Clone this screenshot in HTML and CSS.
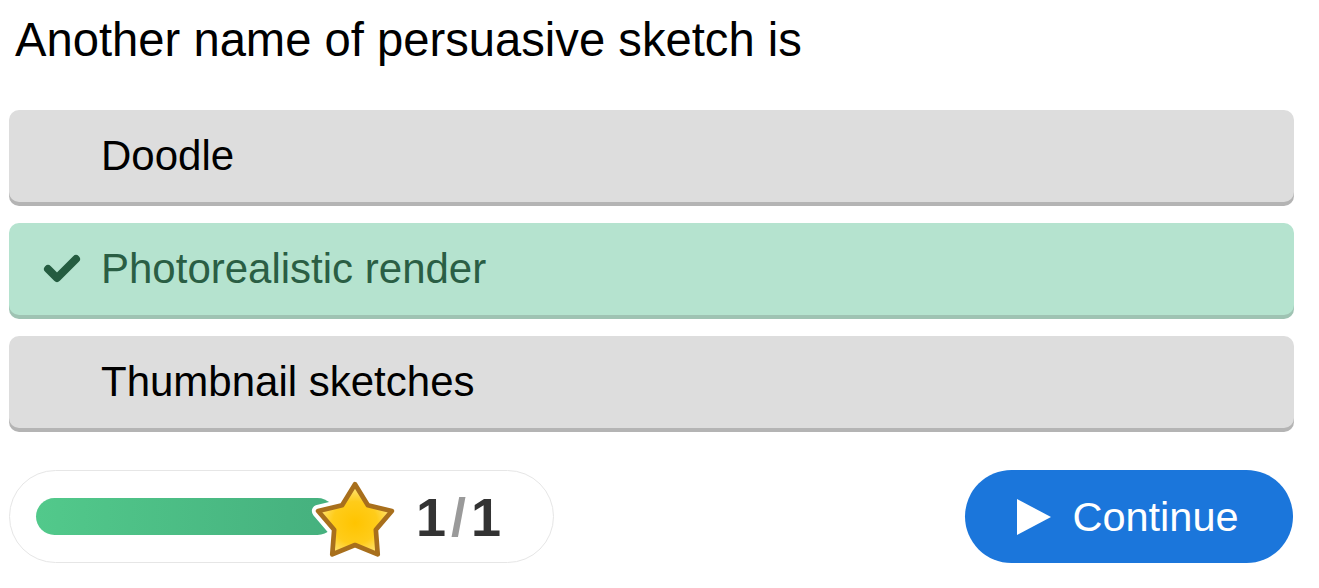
FILE: index.html
```html
<!DOCTYPE html>
<html>
<head>
<meta charset="utf-8">
<link rel="stylesheet" href="styles.css">
</head>
<body>
<div class="quiz">
  <h1 class="question">Another name of persuasive sketch is</h1>
  <div class="options">
    <div class="option">
      <span class="mark"></span>
      <span class="label">Doodle</span>
    </div>
    <div class="option correct">
      <span class="mark">
        <svg width="38" height="30" viewBox="0 0 38 30"><polyline points="5,15 14,24 33,5" fill="none" stroke="#245c40" stroke-width="8" stroke-linecap="round" stroke-linejoin="round"/></svg>
      </span>
      <span class="label">Photorealistic render</span>
    </div>
    <div class="option">
      <span class="mark"></span>
      <span class="label">Thumbnail sketches</span>
    </div>
  </div>
  <div class="footer">
    <div class="progress">
      <div class="bar"></div>
      <svg class="star" width="88" height="88" viewBox="0 0 84 84">
        <defs>
          <radialGradient id="sg" cx="50%" cy="55%" r="55%">
            <stop offset="0" stop-color="#ffc400"/>
            <stop offset="0.55" stop-color="#ffcc1a"/>
            <stop offset="1" stop-color="#ffe98a"/>
          </radialGradient>
        </defs>
        <polygon points="42,5 54.3,25.1 77.2,30.6 61.9,48.5 63.7,71.9 42,63 20.3,71.9 22.1,48.5 6.8,30.6 29.7,25.1" fill="#fff" stroke="#fff" stroke-width="12" stroke-linejoin="round"/>
        <polygon points="42,5 54.3,25.1 77.2,30.6 61.9,48.5 63.7,71.9 42,63 20.3,71.9 22.1,48.5 6.8,30.6 29.7,25.1" fill="url(#sg)" stroke="#a86f1c" stroke-width="4.5" stroke-linejoin="round"/>
      </svg>
      <div class="count"><span>1</span><span class="slash">/</span><span>1</span></div>
    </div>
    <button class="continue">
      <svg width="34" height="36" viewBox="0 0 34 36"><polygon points="0,0 34,18 0,36" fill="#fff"/></svg>
      <span>Continue</span>
    </button>
  </div>
</div>
</body>
</html>
```

FILE: styles.css
```css
html, body {
  margin: 0;
  padding: 0;
  background: #ffffff;
}
body {
  font-family: "Liberation Sans", Arial, sans-serif;
}
.quiz {
  width: 1285px;
  margin-left: 9px;
}
.question {
  margin: 13px 0 0 6px;
  font-size: 47.2px;
  line-height: 54px;
  font-weight: normal;
  color: #000;
}
.options {
  margin-top: 43px;
  display: flex;
  flex-direction: column;
  gap: 21px;
}
.option {
  height: 92px;
  background: #dddddd;
  border-radius: 10px;
  box-shadow: 0 4px 0 #b4b4b4;
  display: flex;
  align-items: center;
  padding-left: 34px;
  box-sizing: border-box;
  font-size: 42px;
  color: #000;
}
.mark {
  width: 58px;
  height: 30px;
  display: flex;
  align-items: center;
}
.mark svg {
  display: block;
}
.option.correct {
  background: #b5e3cf;
  box-shadow: 0 4px 0 #9fc3b3;
  color: #2a5e44;
}
.footer {
  margin-top: 42px;
  display: flex;
  justify-content: space-between;
  align-items: center;
}
.progress {
  width: 545px;
  height: 93px;
  box-sizing: border-box;
  border: 1px solid #e6e6e6;
  border-radius: 47px;
  display: flex;
  align-items: center;
  padding-left: 26px;
}
.bar {
  width: 300px;
  height: 37px;
  border-radius: 19px;
  background: linear-gradient(90deg, #52c98b, #45b07e);
  flex-shrink: 0;
}
.star {
  display: block;
  flex-shrink: 0;
  margin-left: -25px;
  margin-top: 12px;
}
.count {
  margin-left: 17px;
  font-size: 54px;
  font-weight: bold;
  color: #333333;
  display: flex;
  gap: 5px;
}
.count .slash {
  color: #9a9a9a;
}
.continue {
  width: 328px;
  height: 93px;
  border: none;
  border-radius: 47px;
  background: #1b76db;
  color: #fff;
  font-family: "Liberation Sans", Arial, sans-serif;
  font-size: 41.5px;
  display: flex;
  align-items: center;
  justify-content: center;
  gap: 21px;
  padding: 0 2px 0 0;
  margin-right: 1px;
}
.continue svg {
  display: block;
}
```
